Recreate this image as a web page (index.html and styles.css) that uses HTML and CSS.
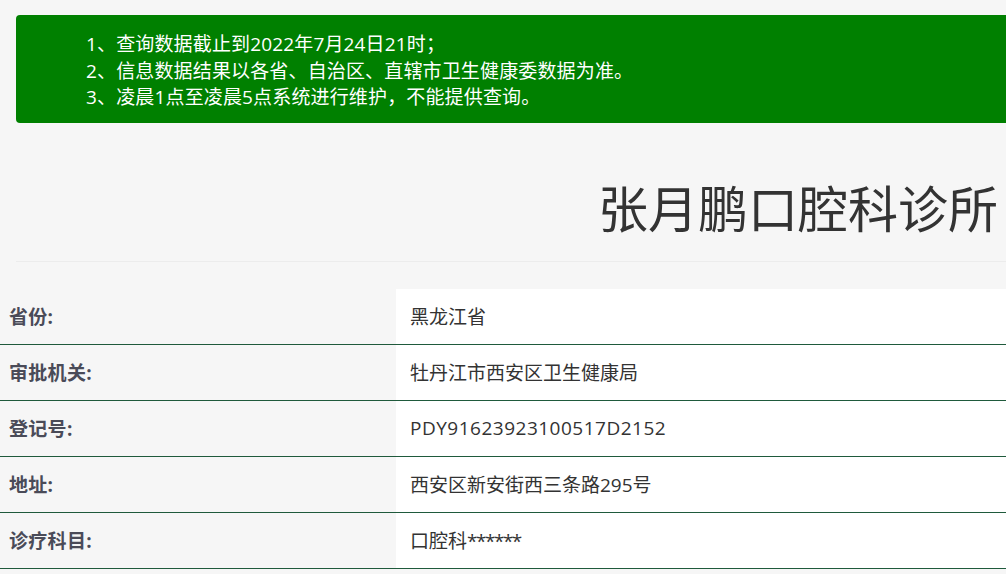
FILE: index.html
```html
<!DOCTYPE html>
<html lang="zh-CN">
<head>
<meta charset="utf-8">
<title>张月鹏口腔科诊所</title>
<link rel="stylesheet" href="styles.css">
</head>
<body>
<div class="page">
  <div class="notice">
    <p>1、查询数据截止到2022年7月24日21时；</p>
    <p>2、信息数据结果以各省、自治区、直辖市卫生健康委数据为准。</p>
    <p>3、凌晨1点至凌晨5点系统进行维护，不能提供查询。</p>
  </div>
  <h1 class="title">张月鹏口腔科诊所</h1>
  <div class="rule"></div>
  <table class="info">
    <tr><th>省份:</th><td>黑龙江省</td></tr>
    <tr><th>审批机关:</th><td>牡丹江市西安区卫生健康局</td></tr>
    <tr><th>登记号:</th><td><span class="code">PDY91623923100517D2152</span></td></tr>
    <tr><th>地址:</th><td>西安区新安街西三条路295号</td></tr>
    <tr><th>诊疗科目:</th><td>口腔科<span class="stars">******</span></td></tr>
  </table>
</div>
</body>
</html>
```

FILE: styles.css
```css
html, body {
  margin: 0;
  padding: 0;
  background: #f6f6f6;
}
body {
  font-family: "Open Sans", "Noto Sans CJK SC", sans-serif;
  color: #333;
  overflow: hidden;
}
.page {
  padding-top: 15px;
}
.notice {
  margin-left: 16px;
  background: #008000;
  border-radius: 4px 0 0 4px;
  padding: 16px 0 12px 70px;
  color: #fff;
  font-size: 19px;
  line-height: 26.5px;
  letter-spacing: 0.15px;
}
.notice p {
  margin: 0;
}
.title {
  margin: 0;
  padding: 54px 8px 0 0;
  height: 84px;
  text-align: right;
  font-weight: normal;
  font-size: 50px;
  line-height: 64px;
  color: #333;
}
.rule {
  margin-left: 16px;
  height: 1px;
  background: #ececec;
}
.info {
  margin-top: 27px;
  width: 100%;
  border-collapse: collapse;
  font-size: 19px;
}
.info tr {
  border-bottom: 1px solid #1f5a3c;
}
.info th {
  width: 387px;
  height: 55px;
  padding: 0 0 0 9px;
  text-align: left;
  font-weight: bold;
  color: #4a4b58;
  letter-spacing: 0.3px;
  vertical-align: middle;
}
.info td {
  background: #fff;
  padding: 0 0 0 14px;
  height: 55px;
  color: #333;
  vertical-align: middle;
}
.info td .code {
  letter-spacing: 0.5px;
}
.info td .stars {
  letter-spacing: -1.5px;
}
```
